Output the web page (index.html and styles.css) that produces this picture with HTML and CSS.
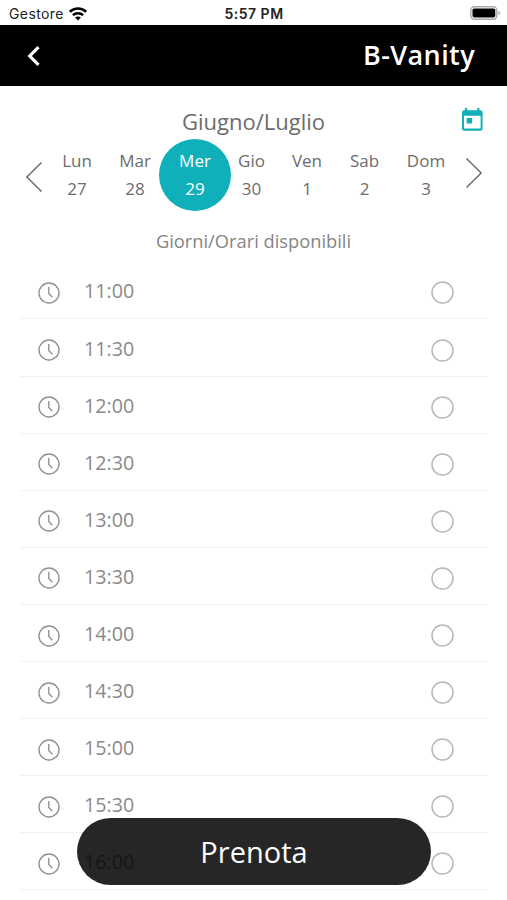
FILE: index.html
```html
<!DOCTYPE html>
<html lang="it">
<head>
  <meta charset="utf-8">
  <title>B-Vanity</title>
  <link rel="stylesheet" href="styles.css">
</head>
<body>
  <div class="status-bar">
    <div class="carrier">
      <span>Gestore</span>
      <svg width="18" height="14" viewBox="0 0 18 14" fill="none" stroke="#000" stroke-width="2.5">
        <path d="M.8 4.800C5.300 .5 12.700 .5 17.200 4.800"/>
        <path d="M3.900 8.200c2.800-2.700 7.400-2.700 10.200 0"/>
        <path d="M9 13.400L6.100 10.500c1.600-1.400 4.200-1.400 5.800 0z" fill="#000" stroke="none"/>
      </svg>
    </div>
    <span class="clock">5:57 PM</span>
    <svg class="battery" width="31" height="14" viewBox="0 0 31 14">
      <rect x=".8" y=".8" width="26" height="12.4" rx="3.6" fill="#fff" stroke="#aaa" stroke-width="1.4"/>
      <rect x="2.5" y="2.4" width="22.8" height="9.2" rx="1.8" fill="#000"/>
      <path d="M28.6 4.8c2 .8 2 3.600 0 4.400z" fill="#aaa"/>
    </svg>
  </div>
  <header class="header">
    <svg width="14" height="20" viewBox="0 0 14 20" fill="none" stroke="#fff" stroke-width="3.2">
      <path d="M12.500 1.200L3.800 10l8.700 8.800"/>
    </svg>
    <h1>B-Vanity</h1>
  </header>
  <main>
    <div class="month">
      <h2>Giugno/Luglio</h2>
      <svg class="calendar" width="22" height="24" viewBox="0 0 22 24">
        <path fill="#0fb0ba" fill-rule="evenodd" d="M3.900 0h2.300v2.200h10V0h2.300v2.200h.9A2.200 2.200 0 0 1 21.600 4.400v16.200a2.200 2.200 0 0 1-2.200 2.200h-16.200A2.200 2.200 0 0 1 1 20.600V4.400a2.200 2.200 0 0 1 2.200-2.200h.7zM3 7.700v12.900h16.600V7.700zM5.600 10h5.500v5.500H5.600z"/>
      </svg>
    </div>
    <div class="week">
      <svg class="prev" width="18" height="32" viewBox="0 0 18 32"><path d="M16.500 1.500L1.900 16l14.600 14.500"/></svg>
      <div class="days">
        <div class="day"><span>Lun</span><span>27</span></div>
        <div class="day"><span>Mar</span><span>28</span></div>
        <div class="day selected"><span>Mer</span><span>29</span></div>
        <div class="day"><span>Gio</span><span>30</span></div>
        <div class="day"><span>Ven</span><span>1</span></div>
        <div class="day"><span>Sab</span><span>2</span></div>
        <div class="day"><span>Dom</span><span>3</span></div>
      </div>
      <svg class="next" width="18" height="32" viewBox="0 0 18 32"><path d="M1.500 1.500l14.600 14.500l-14.600 14.500"/></svg>
    </div>
    <p class="subtitle">Giorni/Orari disponibili</p>
    <ul class="slots" id="slots"></ul>
  </main>
  <button class="book">Prenota</button>
  <script>
    const times = ["11:00", "11:30", "12:00", "12:30", "13:00", "13:30", "14:00", "14:30", "15:00", "15:30", "16:00"];
    const clockIcon = '<svg class="clock-icon" width="22" height="22" viewBox="0 0 22 22"><circle cx="11" cy="11" r="10"/><path d="M10.800 5v6.500l3.500 3.700"/></svg>';
    const radioIcon = '<svg class="radio" width="23" height="23" viewBox="0 0 23 23"><circle cx="11.500" cy="11.500" r="10.500"/></svg>';
    const slots = document.getElementById("slots");

    times.forEach(function(time) {
      const row = document.createElement("li");
      row.className = "slot";
      row.innerHTML = clockIcon + '<span class="time">' + time + '</span>' + radioIcon;
      slots.appendChild(row);
    });
  </script>
</body>
</html>
```
FILE: styles.css
```css
* {
  box-sizing: border-box;
}
body {
  margin: 0;
  height: 900px;
  overflow: hidden;
  background-color: #fff;
  font-family: "Open Sans", sans-serif;
  color: #6c6c6c;
}
.status-bar {
  display: grid;
  grid-template-columns: 1fr auto 1fr;
  align-items: center;
  height: 25px;
  padding: 2px 6px 0 9px;
  font-family: Inter, sans-serif;
  font-size: 14px;
  color: #222;
}
.carrier {
  display: flex;
  align-items: center;
  gap: 5px;
  letter-spacing: 0.4px;
}
.clock {
  font-weight: 600;
  letter-spacing: 0.5px;
  margin-right: 2px;
}
.battery {
  justify-self: end;
  margin-top: -2px;
}
.header {
  display: flex;
  align-items: center;
  justify-content: space-between;
  height: 61px;
  padding: 0 32px 0 26px;
  background-color: #000;
  color: #fff;
}
.header h1 {
  margin: -2px 0 0;
  font-size: 27px;
  font-weight: 600;
  letter-spacing: 0.4px;
}
.month {
  display: grid;
  grid-template-columns: 1fr auto 1fr;
  align-items: center;
  height: 53px;
  padding: 16px 24px 0;
}
.month h2 {
  grid-column: 2;
  margin: 0;
  font-size: 22px;
  font-weight: 400;
  line-height: 36px;
}
.calendar {
  justify-self: end;
  margin-top: -2px;
}
.week {
  display: flex;
  height: 72px;
  padding-left: 25px;
}
.prev,
.next {
  fill: none;
  stroke: #6c6c6c;
  stroke-width: 1.5;
}
.prev {
  margin-top: 22px;
}
.next {
  margin: 18px 0 0 5px;
}
.days {
  display: grid;
  grid-template-columns: 58px 58px 62px 51px 60px 55px 68px;
  justify-items: center;
  margin-left: 5px;
}
.day {
  display: flex;
  flex-direction: column;
  align-items: center;
  width: 72px;
  height: 72px;
  margin: 0 -10px;
  padding-top: 8px;
  font-size: 17px;
  line-height: 27.500px;
}
.selected {
  border-radius: 50%;
  background-color: #0fb0ba;
  color: #fff;
}
.subtitle {
  margin: 16px 0 0;
  font-size: 18.300px;
  line-height: 28px;
  text-align: center;
  color: #858585;
}
.slots {
  margin: 7.400px 19px 0 20px;
  padding: 0;
  list-style: none;
}
.slot {
  display: flex;
  align-items: center;
  height: 57.100px;
  padding: 5px 34px 0 17.500px;
  border-bottom: 1px solid #f2f2f2;
}
.clock-icon {
  fill: none;
  stroke: #929292;
  stroke-width: 1.4;
}
.time {
  flex: 1;
  margin: -3px 0 0 24.500px;
  font-size: 19.700px;
  line-height: 28px;
  color: #8a8a8a;
}
.radio {
  fill: none;
  stroke: #b8b8b8;
  stroke-width: 1.5;
}
.book {
  position: absolute;
  left: 77px;
  top: 818px;
  width: 354px;
  height: 67px;
  border: none;
  border-radius: 34px;
  background-color: rgba(0, 0, 0, 0.85);
  font-family: inherit;
  font-size: 29px;
  color: #fff;
}
```
